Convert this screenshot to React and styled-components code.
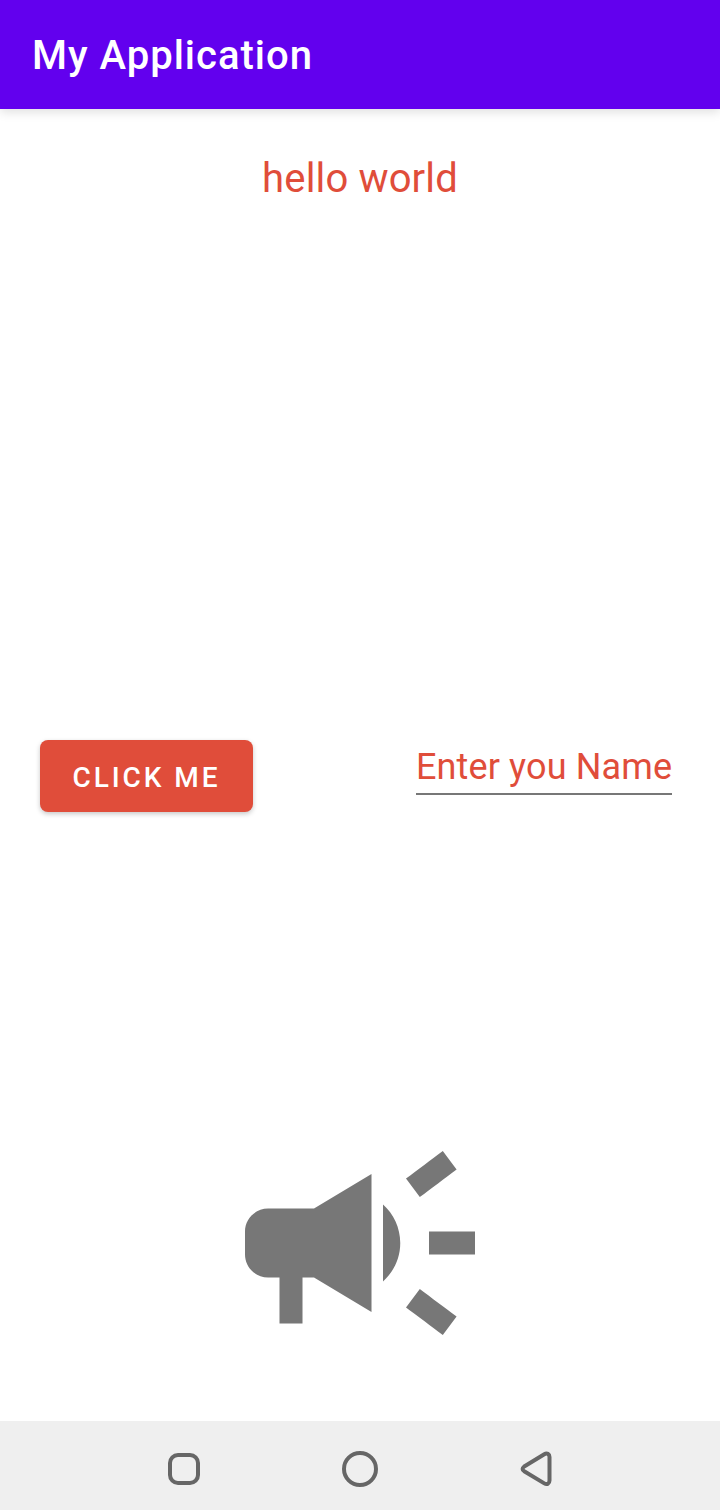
import React from "react";
import styled, { createGlobalStyle } from "styled-components";

const GlobalStyle = createGlobalStyle`
  * { box-sizing: border-box; }
  body { margin: 0; background: #fff; font-family: Roboto, sans-serif; }
`;

const Screen = styled.div`
  display: flex;
  flex-direction: column;
  width: 720px;
  height: 1510px;
  background: #fff;
  overflow: hidden;
`;

const AppBar = styled.header`
  display: flex;
  align-items: center;
  flex: 0 0 109px;
  padding: 2px 32px 0;
  background: #6200ee;
  box-shadow: 0 3px 10px rgba(0, 0, 0, 0.13);
`;

const Title = styled.h1`
  margin: 0;
  color: #fff;
  font-size: 40px;
  font-weight: 500;
  line-height: 48px;
  letter-spacing: 1px;
  white-space: nowrap;
`;

const Content = styled.main`
  flex: 1;
  display: flex;
  flex-direction: column;
  align-items: center;
`;

const Greeting = styled.p`
  margin: 46px 0 0;
  color: #e04d3a;
  font-size: 40px;
  line-height: 48px;
  letter-spacing: 0.15px;
  white-space: nowrap;
`;

const FormRow = styled.div`
  display: flex;
  justify-content: space-between;
  align-items: flex-start;
  width: 100%;
  height: 72px;
  margin-top: 537px;
  padding: 0 48px 0 40px;
`;

const ActionButton = styled.button`
  width: 213px;
  height: 72px;
  padding: 3px 0 0;
  border: 0;
  border-radius: 8px;
  background: #e04d3a;
  color: #fff;
  font: 500 28px/36px Roboto, sans-serif;
  letter-spacing: 2.95px;
  white-space: nowrap;
  box-shadow: 0 2px 5px rgba(0, 0, 0, 0.22);
`;

const NameField = styled.input`
  width: 256px;
  height: 55px;
  padding: 0;
  border: 0;
  border-bottom: 2px solid #777;
  outline: 0;
  background: transparent;
  font: 400 36px/42px Roboto, sans-serif;
  letter-spacing: 0.13px;
  &::placeholder { color: #e04d3a; opacity: 1; }
`;

const Megaphone = styled.svg`
  display: block;
  width: 276px;
  height: 276px;
  margin-top: 293px;
  fill: #777;
`;

const NavBar = styled.nav`
  display: flex;
  justify-content: space-around;
  align-items: center;
  flex: 0 0 89px;
  padding: 7px 96px 0;
  background: #efefef;
`;

const NavIcon = styled.svg`
  width: 40px;
  height: 40px;
  fill: none;
  stroke: #666;
  stroke-width: 4;
  stroke-linejoin: round;
`;

export default function App() {
  return (
    <Screen>
      <GlobalStyle />
      <AppBar><Title>My Application</Title></AppBar>
      <Content>
        <Greeting>hello world</Greeting>
        <FormRow>
          <ActionButton>CLICK ME</ActionButton>
          <NameField placeholder="Enter you Name" />
        </FormRow>
        <Megaphone viewBox="0 0 24 24">
          <path d="M18 11v2h4v-2h-4zM16 17.61c.96.71 2.21 1.65 3.2 2.39.4-.53.8-1.07 1.2-1.6-.99-.74-2.24-1.68-3.2-2.4-.4.54-.8 1.08-1.2 1.61zM20.4 5.6c-.4-.53-.8-1.07-1.2-1.6-.99.74-2.24 1.68-3.2 2.4.4.53.8 1.07 1.2 1.6.96-.72 2.21-1.65 3.2-2.4zM4 9c-1.1 0-2 .9-2 2v2c0 1.1.9 2 2 2h1v4h2v-4h1l5 3V6L8 9H4zM15.5 12c0-1.33-.58-2.53-1.5-3.35v6.69c.92-.81 1.5-2.01 1.5-3.34z" />
        </Megaphone>
      </Content>
      <NavBar>
        <NavIcon viewBox="0 0 40 40"><rect x="6" y="6" width="28" height="28" rx="8" /></NavIcon>
        <NavIcon viewBox="0 0 40 40"><circle cx="20" cy="20" r="16" /></NavIcon>
        <NavIcon viewBox="0 0 40 40"><path d="M33.5 8 V31.5 C33.5 34.5 31 36 28.3 34.4 L8.2 22.2 Q5 20 8.2 17.5 L28.3 5.2 C31 3.6 33.5 5 33.5 8Z" /></NavIcon>
      </NavBar>
    </Screen>
  );
}
